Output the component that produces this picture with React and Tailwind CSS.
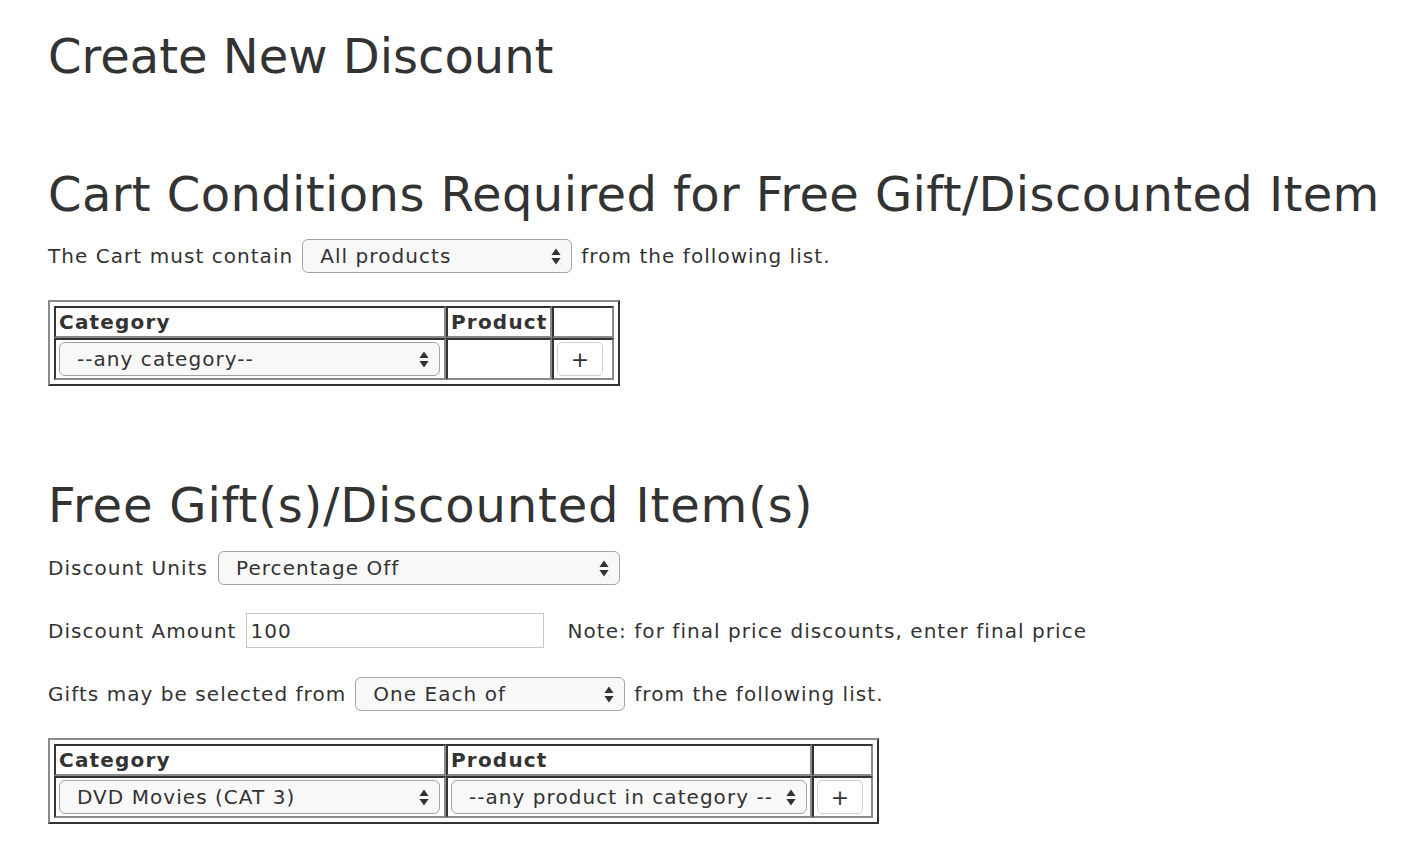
import React from "react";

const font = { fontFamily: '"DejaVu Sans", Verdana, sans-serif' };

function Arrows() {
  return (
    <svg width="10" height="17" viewBox="0 0 10 17" className="shrink-0">
      <path d="M5 0.5 L9.6 7 L0.4 7 Z" fill="#333" />
      <path d="M5 16.5 L9.6 10 L0.4 10 Z" fill="#333" />
    </svg>
  );
}

function Select({ value, w }) {
  return (
    <div
      className={`${w} h-[34px] shrink-0 flex items-center justify-between pl-[17px] pr-[10px] rounded-[6px] border border-[#a3a3a3] bg-[#f8f8f8] text-[20px] leading-[24px] tracking-[1.05px] text-[#333] whitespace-nowrap overflow-hidden`}
    >
      <span>{value}</span>
      <Arrows />
    </div>
  );
}

function PlusButton() {
  return (
    <div className="w-[46px] h-[34px] flex items-center justify-center rounded-[5px] border border-[#cfcfcf] bg-white text-[22px] text-[#333]">
      +
    </div>
  );
}

const cell =
  "border-2 border-t-[#333] border-l-[#333] border-b-[#8a8a8a] border-r-[#8a8a8a] px-[3px] text-left align-middle";

function Table({ width, cols, product }) {
  return (
    <div className="inline-block border-2 border-t-[#8a8a8a] border-l-[#8a8a8a] border-b-[#333] border-r-[#333] p-[4px]">
      <table className={`${width} table-fixed border-separate border-spacing-0`}>
        <colgroup>
          <col className={cols[0]} />
          <col className={cols[1]} />
          <col className={cols[2]} />
        </colgroup>
        <thead>
          <tr>
            <th className={`${cell} h-[32px] py-0 font-bold text-[20px] leading-[26px] tracking-[1.2px]`}>Category</th>
            <th className={`${cell} h-[32px] py-0 font-bold text-[20px] leading-[26px] tracking-[1.2px]`}>Product</th>
            <th className={`${cell} h-[32px] py-0`}></th>
          </tr>
        </thead>
        <tbody>
          <tr>
            <td className={`${cell} h-[42px] py-[2px]`}>{product.cat}</td>
            <td className={`${cell} h-[42px] py-[2px]`}>{product.prod}</td>
            <td className={`${cell} h-[42px] py-[2px]`}>
              <PlusButton />
            </td>
          </tr>
        </tbody>
      </table>
    </div>
  );
}

export default function App() {
  return (
    <div style={font} className="bg-white text-[#333] px-[48px] min-h-[868px] pb-[20px]">
      <h1 className="pt-[28px] text-[48px] leading-[56px] font-normal">Create New Discount</h1>

      <h2 className="mt-[82px] text-[48px] leading-[56px] font-normal tracking-[0.4px] whitespace-nowrap">
        Cart Conditions Required for Free Gift/Discounted Item
      </h2>

      <div className="mt-[17px] flex items-center h-[34px] text-[20px] tracking-[1.05px]">
        <span>The Cart must contain</span>
        <div className="ml-[9px] mr-[9px]">
          <Select value="All products" w="w-[270px]" />
        </div>
        <span>from the following list.</span>
      </div>

      <div className="mt-[27px]">
        <Table
          width="w-[560px]"
          cols={["w-[392px]", "w-[106px]", "w-[62px]"]}
          product={{ cat: <Select value="--any category--" w="w-[381px]" />, prod: null }}
        />
      </div>

      <h2 className="mt-[84px] text-[48px] leading-[56px] font-normal tracking-[0.85px]">
        Free Gift(s)/Discounted Item(s)
      </h2>

      <div className="mt-[18px] flex items-center h-[34px] text-[20px] tracking-[1.05px]">
        <span>Discount Units</span>
        <div className="ml-[10px]">
          <Select value="Percentage Off" w="w-[402px]" />
        </div>
      </div>

      <div className="mt-[28px] flex items-center h-[35px] text-[20px] tracking-[1.05px]">
        <span>Discount Amount</span>
        <div className="ml-[9px] w-[298px] h-[35px] border border-[#c8c8c8] flex items-center pl-[4px] text-[20px]">
          100
        </div>
        <span className="ml-[24px]">Note: for final price discounts, enter final price</span>
      </div>

      <div className="mt-[29px] flex items-center h-[34px] text-[20px] tracking-[1.05px]">
        <span>Gifts may be selected from</span>
        <div className="ml-[9px] mr-[9px]">
          <Select value="One Each of" w="w-[270px]" />
        </div>
        <span>from the following list.</span>
      </div>

      <div className="mt-[27px]">
        <Table
          width="w-[819px]"
          cols={["w-[392px]", "w-[366px]", "w-[61px]"]}
          product={{
            cat: <Select value="DVD Movies (CAT 3)" w="w-[381px]" />,
            prod: <Select value="--any product in category --" w="w-[356px]" />,
          }}
        />
      </div>
    </div>
  );
}
